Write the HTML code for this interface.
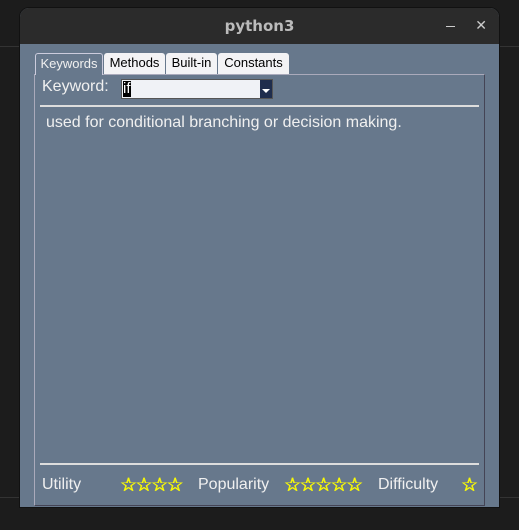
<html><body style="margin:0;width:519px;height:530px;background:#1c1c1c;position:relative;overflow:hidden;font-family:'Liberation Sans',sans-serif">
<div style="position:absolute;left:0;top:46px;width:519px;height:1px;background:#333"></div>
<div style="position:absolute;left:0;top:497px;width:519px;height:1px;background:#333"></div>
<div style="position:absolute;left:19px;top:7px;width:481px;height:501px;background:#67788c;border-radius:10px 10px 0 0;overflow:hidden;border:1px solid #111;box-sizing:border-box">
 <div style="height:36px;background:#2b2b2b;color:#bbb;font-weight:bold;font-size:15px;text-align:center;line-height:36px;font-family:'DejaVu Sans',sans-serif">python3</div>
 <div style="position:absolute;right:44px;top:18px;width:9px;height:1px;background:#ccc"></div>
 <div style="position:absolute;right:12px;top:9px;color:#ccc;font-size:14px">✕</div>
</div>
<div style="position:absolute;left:34px;top:74px;width:451px;height:432px;border:1px solid #aab;border-right-color:#445;border-bottom-color:#445;box-sizing:border-box"></div>
<div style="position:absolute;left:35px;top:53px;width:68px;height:22px;background:#67788c;border:1px solid #ccd;border-bottom:none;border-radius:3px 3px 0 0;box-sizing:border-box;color:#f0f0f0;font-size:13px;text-align:center;line-height:20px">Keywords</div>
<div style="position:absolute;left:104px;top:53px;width:61px;height:21px;background:#f3f3f5;border-radius:3px 3px 0 0;font-size:13px;text-align:center;line-height:20px">Methods</div>
<div style="position:absolute;left:166px;top:53px;width:51px;height:21px;background:#f3f3f5;border-radius:3px 3px 0 0;font-size:13px;text-align:center;line-height:20px">Built-in</div>
<div style="position:absolute;left:218px;top:53px;width:71px;height:21px;background:#f3f3f5;border-radius:3px 3px 0 0;font-size:13px;text-align:center;line-height:20px">Constants</div>
<div style="position:absolute;left:42px;top:78px;color:#f0f0f0;font-size:16px">Keyword:</div>
<div style="position:absolute;left:121px;top:79px;width:152px;height:20px;background:#f0f2f6;border:1px solid #555;box-sizing:border-box">
 <span style="position:absolute;left:1px;top:1px;background:#000;color:#fff;font-size:15px;line-height:16px">if</span>
 <div style="position:absolute;right:0;top:0;width:12px;height:18px;background:#1f2d4d"><div style="position:absolute;left:2px;top:9px;border-left:4px solid transparent;border-right:4px solid transparent;border-top:4px solid #fff"></div></div>
</div>
<div style="position:absolute;left:40px;top:105px;width:439px;height:2px;background:#ddd"></div>
<div style="position:absolute;left:46px;top:114px;color:#f0f0f0;font-size:16px">used for conditional branching or decision making.</div>
<div style="position:absolute;left:40px;top:463px;width:439px;height:2px;background:#ddd"></div>
<div style="position:absolute;left:42px;top:476px;color:#f0f0f0;font-size:16px">Utility</div>
<div style="position:absolute;left:120px;top:474px;color:#ffff00;font-size:19px;letter-spacing:-1.5px;text-shadow:0.5px 0 0 #ff0,-0.5px 0 0 #ff0">☆☆☆☆</div>
<div style="position:absolute;left:198px;top:476px;color:#f0f0f0;font-size:16px">Popularity</div>
<div style="position:absolute;left:284px;top:474px;color:#ffff00;font-size:19px;letter-spacing:-1.5px;text-shadow:0.5px 0 0 #ff0,-0.5px 0 0 #ff0">☆☆☆☆☆</div>
<div style="position:absolute;left:378px;top:476px;color:#f0f0f0;font-size:16px">Difficulty</div>
<div style="position:absolute;left:461px;top:474px;color:#ffff00;font-size:19px;text-shadow:0.5px 0 0 #ff0,-0.5px 0 0 #ff0">☆</div>
</body></html>
